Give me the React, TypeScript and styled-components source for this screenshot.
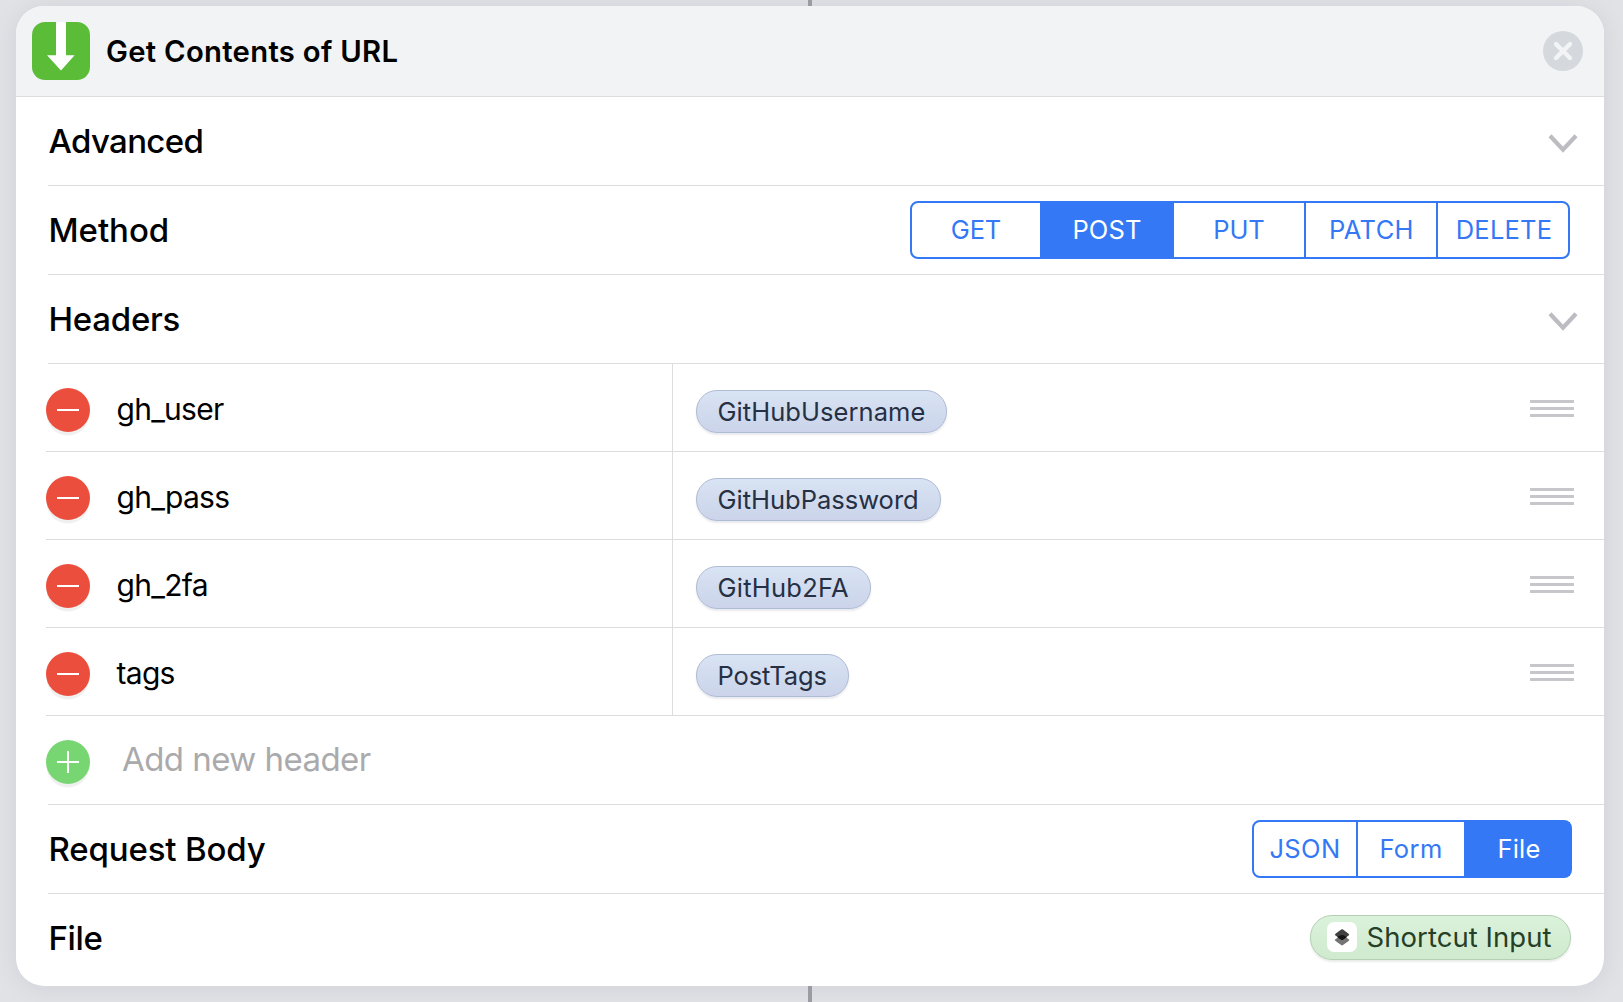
import React from "react";
import styled, { createGlobalStyle, css } from "styled-components";

const blue = "#3478f6";
const hairline = "#dddddf";

const GlobalStyle = createGlobalStyle`
  *, *::before, *::after { box-sizing: border-box; }
  body {
    margin: 0;
    background: #e1e2e6;
    font-family: Inter, "Liberation Sans", sans-serif;
    color: #000;
    -webkit-font-smoothing: antialiased;
  }
`;

const Page = styled.main`
  width: 1623px;
  height: 1002px;
  overflow: hidden;
  display: flex;
  flex-direction: column;
  align-items: center;
`;

const Connector = styled.div<{ $height: number }>`
  width: 4px;
  height: ${(p) => p.$height}px;
  flex: none;
  background: #9b9ba3;
  margin-right: 3px;
  z-index: 1;
`;

const Card = styled.section`
  width: 1588px;
  height: 980px;
  margin-right: 3px;
  flex: none;
  display: flex;
  flex-direction: column;
  background: #fff;
  border-radius: 28px;
  overflow: hidden;
  box-shadow: 0 2px 26px rgba(20, 20, 35, 0.075);
`;

const TitleBar = styled.header`
  height: 91px;
  flex: none;
  display: flex;
  align-items: center;
  padding: 0 21px 0 16px;
  background: #f1f3f5;
  border-bottom: 1px solid ${hairline};
`;

const ActionIcon = styled.svg`
  width: 58px;
  height: 58px;
  margin-right: 16px;
`;

const Title = styled.h1`
  margin: 1px 0 0;
  font-size: 29.25px;
  line-height: 36px;
  font-weight: 600;
  letter-spacing: 0.3px;
  flex: 1;
`;

const CloseButton = styled.button`
  width: 40px;
  height: 40px;
  padding: 0;
  border: 0;
  border-radius: 50%;
  background: #d5d8dd;
  svg { display: block; width: 40px; height: 40px; }
`;

const Row = styled.div<{ $last?: boolean }>`
  height: 89px;
  flex: none;
  display: flex;
  align-items: center;
  justify-content: space-between;
  margin-left: 32px;
  border-bottom: 1px solid ${(p) => (p.$last ? "transparent" : hairline)};
`;

const RowLabel = styled.span<{ $track?: number }>`
  padding-left: 0.5px;
  font-size: 33px;
  line-height: 40px;
  font-weight: 500;
  letter-spacing: ${(p) => p.$track ?? 0}px;
  white-space: nowrap;
`;

const ChevronIcon = styled.svg`
  width: 32px;
  height: 22px;
  margin: 4px 25px 0 0;
`;

const Segments = styled.div<{ $inset: number }>`
  height: 58px;
  display: flex;
  margin-right: ${(p) => p.$inset}px;
  border: 2px solid ${blue};
  border-radius: 8px;
  background: #fff;
`;

const Segment = styled.button<{ $width: number; $active: boolean; $divided: boolean; $track: number; $pad: number }>`
  width: ${(p) => p.$width}px;
  padding: 0 0 0 ${(p) => p.$pad}px;
  border: 0;
  border-left: ${(p) => (p.$divided ? `2px solid ${blue}` : "0")};
  background: ${(p) => (p.$active ? blue : "transparent")};
  color: ${(p) => (p.$active ? "#fff" : blue)};
  font: 400 25.5px/54px Inter, "Liberation Sans", sans-serif;
  letter-spacing: ${(p) => p.$track}px;
  text-align: center;
`;

const HeaderEntry = styled.div`
  height: 88px;
  flex: none;
  margin-left: 30px;
  display: grid;
  grid-template-columns: 70px 556px 1fr 74px;
  border-bottom: 1px solid ${hairline};
`;

const RoundButton = styled.button<{ $color: string }>`
  width: 44px;
  height: 44px;
  margin: 24px 0 0;
  padding: 0;
  border: 0;
  border-radius: 50%;
  background: ${(p) => p.$color};
  box-shadow: 0 4px 0 -0.5px rgba(0, 0, 0, 0.06);
  svg { display: block; width: 44px; height: 44px; }
`;

const HeaderKey = styled.span<{ $track: number }>`
  display: flex;
  align-items: center;
  padding: 2px 0 0 0.5px;
  font-size: 30px;
  line-height: 36px;
  font-feature-settings: "calt" 0;
  letter-spacing: ${(p) => p.$track}px;
`;

const HeaderValue = styled.div`
  border-left: 1px solid ${hairline};
  padding: 25.5px 0 0 22.5px;
`;

const pill = css`
  display: inline-flex;
  align-items: center;
  white-space: nowrap;
  border: 1px solid;
`;

const VariableChip = styled.span<{ $track: number }>`
  ${pill}
  height: 43px;
  padding: 2px 21px 0;
  border-color: #b0bbd6;
  border-radius: 21px;
  background: linear-gradient(#d8e3f3, #cbd4ea);
  box-shadow: 0 2px 2px rgba(40, 50, 80, 0.1);
  color: #253044;
  font-size: 25.5px;
  line-height: 36px;
  letter-spacing: ${(p) => p.$track}px;
`;

const Grip = styled.div`
  width: 44px;
  padding-top: 36px;
  display: flex;
  flex-direction: column;
  gap: 4px;
  i { height: 3px; background: #c6c6cb; }
`;

const AddRow = styled.div`
  height: 89px;
  flex: none;
  display: flex;
  align-items: flex-start;
  padding-left: 30px;
  background: linear-gradient(${hairline}, ${hairline}) 32px 100% / 100% 1px no-repeat;
`;

const Placeholder = styled.span`
  margin: 23px 0 0 32px;
  font-size: 33px;
  line-height: 40px;
  letter-spacing: -0.55px;
  color: #aaaaac;
`;

const InputChip = styled.span`
  ${pill}
  height: 45px;
  width: 261px;
  margin: -2px 33.5px 0 0;
  padding-left: 16px;
  border-color: #b3d0b3;
  border-radius: 22px;
  background: linear-gradient(#daf2da, #cfeacf);
  box-shadow: 0 2px 2px rgba(30, 70, 30, 0.1);
  color: #263f27;
  font-size: 27.5px;
  line-height: 36px;
  letter-spacing: 0.05px;
  svg { width: 30px; height: 30px; margin-right: 10px; }
`;

type Option = { label: string; width: number; track: number; pad?: number };

const methods: Option[] = [
  { label: "GET", width: 128, track: -0.15 },
  { label: "POST", width: 134, track: 0.12 },
  { label: "PUT", width: 130, track: -0.1 },
  { label: "PATCH", width: 132, track: 0.33, pad: 1 },
  { label: "DELETE", width: 132, track: 0.21, pad: 2 },
];

const bodyTypes: Option[] = [
  { label: "JSON", width: 102, track: 0.36 },
  { label: "Form", width: 108, track: 0.39 },
  { label: "File", width: 106, track: 0.2, pad: 4 },
];

const headers = [
  { name: "gh_user", nameTrack: -0.75, value: "GitHubUsername", valueTrack: 0.06 },
  { name: "gh_pass", nameTrack: -0.75, value: "GitHubPassword", valueTrack: 0 },
  { name: "gh_2fa", nameTrack: -0.7, value: "GitHub2FA", valueTrack: 0.25 },
  { name: "tags", nameTrack: -0.7, value: "PostTags", valueTrack: -0.15 },
];

function SegmentedControl({ options, selected, inset }: { options: Option[]; selected: string; inset: number }) {
  return (
    <Segments $inset={inset}>
      {options.map((o, i) => {
        const active = o.label === selected;
        const divided = i > 0 && !active && options[i - 1].label !== selected;
        return (
          <Segment
            key={o.label}
            $width={o.width}
            $active={active}
            $divided={divided}
            $track={o.track}
            $pad={o.pad ?? 0}
          >
            {o.label}
          </Segment>
        );
      })}
    </Segments>
  );
}

const Chevron = () => (
  <ChevronIcon viewBox="0 0 32 22" fill="none">
    <path d="M3 3.800 16 17.600 29 3.800" stroke="#bcbcc2" strokeWidth="4.200" />
  </ChevronIcon>
);

export default function App() {
  return (
    <Page>
      <GlobalStyle />
      <Connector $height={6} />
      <Card>
        <TitleBar>
          <ActionIcon viewBox="0 0 58 58">
            <rect width="58" height="58" rx="13" fill="#5bbc38" />
            <path d="M24 0h10v33.3h8.6L29 48.5 15 33.3h9z" fill="#fff" />
          </ActionIcon>
          <Title>Get Contents of URL</Title>
          <CloseButton aria-label="Remove action">
            <svg viewBox="0 0 40 40">
              <path d="M13 13l14 14M27 13L13 27" stroke="#f3f4f6" strokeWidth="4.4" strokeLinecap="round" />
            </svg>
          </CloseButton>
        </TitleBar>

        <Row>
          <RowLabel $track={-0.65}>Advanced</RowLabel>
          <Chevron />
        </Row>
        <Row>
          <RowLabel $track={-0.05}>Method</RowLabel>
          <SegmentedControl options={methods} selected="POST" inset={34} />
        </Row>
        <Row>
          <RowLabel $track={-0.25}>Headers</RowLabel>
          <Chevron />
        </Row>

        {headers.map((h) => (
          <HeaderEntry key={h.name}>
            <RoundButton $color="#eb4e3d" aria-label="Delete header">
              <svg viewBox="0 0 44 44">
                <path d="M11 22h22" stroke="#fff" strokeWidth="2" />
              </svg>
            </RoundButton>
            <HeaderKey $track={h.nameTrack}>{h.name}</HeaderKey>
            <HeaderValue>
              <VariableChip $track={h.valueTrack}>{h.value}</VariableChip>
            </HeaderValue>
            <Grip>
              <i />
              <i />
              <i />
            </Grip>
          </HeaderEntry>
        ))}

        <AddRow>
          <RoundButton $color="#77d672" aria-label="Add header">
            <svg viewBox="0 0 44 44">
              <path d="M11 22h22M22 11v22" stroke="#fff" strokeWidth="2" />
            </svg>
          </RoundButton>
          <Placeholder>Add new header</Placeholder>
        </AddRow>

        <Row>
          <RowLabel $track={-0.15}>Request Body</RowLabel>
          <SegmentedControl options={bodyTypes} selected="File" inset={32} />
        </Row>
        <Row $last>
          <RowLabel $track={-0.4}>File</RowLabel>
          <InputChip>
            <svg viewBox="0 0 30 30">
              <rect width="30" height="30" rx="7" fill="#fff" />
              <path d="M8.5 17.2 14.2 13.2q.9-.6 1.8 0l5.6 4q1.2.9 0 1.8l-5.6 4.1q-.9.6-1.8 0L8.5 19q-1.2-.9 0-1.8z" fill="#747474" />
              <path d="M8.5 11.7 14.2 7.5q.9-.6 1.8 0l5.6 4.2q1.2.9 0 1.8l-5.6 4.1q-.9.6-1.8 0L8.5 13.5q-1.2-.9 0-1.8z" fill="#404040" />
              <path d="M10.2 14.9 14.2 13.1q.9-.4 1.8 0l4 1.8-4 2.8q-.9.6-1.8 0z" fill="#141414" />
            </svg>
            Shortcut Input
          </InputChip>
        </Row>
      </Card>
      <Connector $height={16} />
    </Page>
  );
}
